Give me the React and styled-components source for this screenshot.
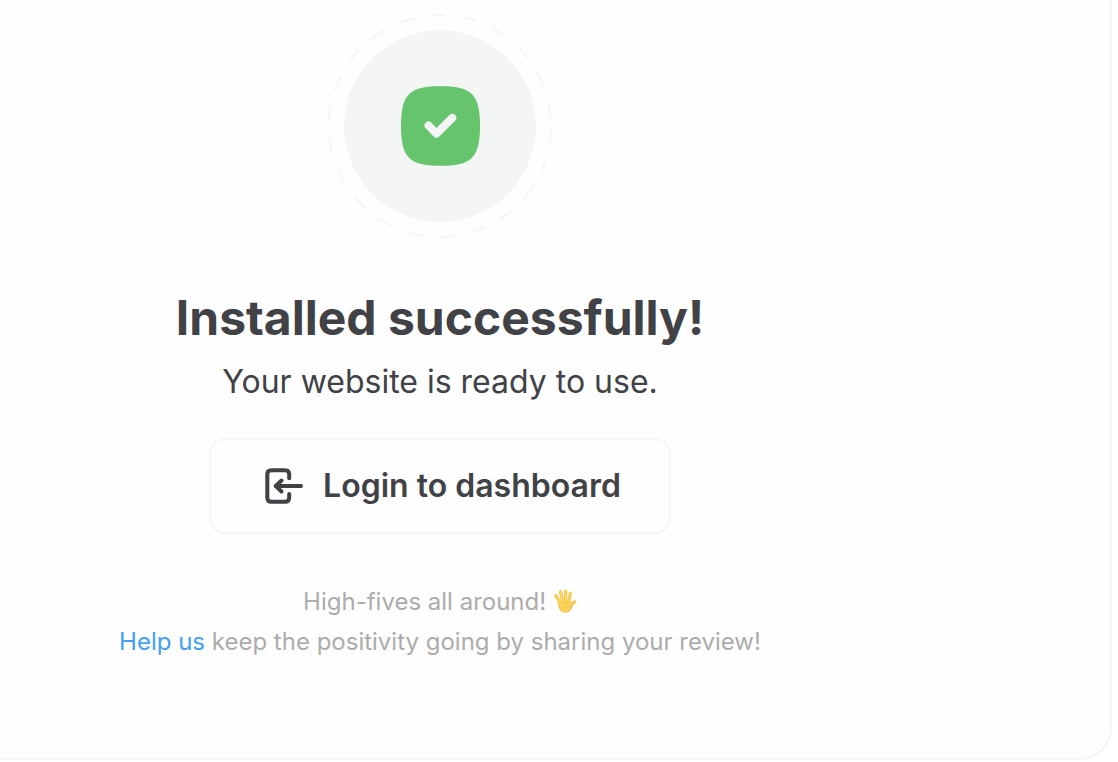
import React from 'react';
import styled, { createGlobalStyle } from 'styled-components';

const colors = {
  text: '#414246',
  muted: '#acacac',
  link: '#42a0f5',
  line: '#f5f6f6',
  soft: '#f4f6f6',
  success: '#66c56c',
};

const GlobalStyle = createGlobalStyle`
  * {
    box-sizing: border-box;
  }

  body {
    margin: 0;
    background: #fff;
    color: ${colors.text};
    font-family: Inter, 'Liberation Sans', sans-serif;
  }
`;

const Card = styled.main`
  display: flex;
  flex-direction: column;
  align-items: center;
  margin-right: 6px;
  padding: 14px 230px 96px 0;
  border: 2px solid ${colors.line};
  border-width: 0 2px 2px 0;
  border-radius: 0 0 32px 0;
  background: #fefefe;
  text-align: center;
`;

const Badge = styled.svg`
  display: block;
  width: 224px;
  height: 224px;
`;

const Title = styled.h1`
  margin: 48px 0 8px;
  font-size: 48px;
  font-weight: 700;
  line-height: 64px;
`;

const Subtitle = styled.p`
  margin: 0;
  font-size: 32px;
  line-height: 48px;
`;

const LoginButton = styled.button`
  display: flex;
  align-items: center;
  gap: 16px;
  height: 96px;
  margin: 32px 0 48px;
  padding: 0 48px;
  border: 2px solid ${colors.line};
  border-radius: 16px;
  background: transparent;
  color: inherit;
  font-family: inherit;
  font-size: 32px;
  font-weight: 600;
  line-height: 48px;
  cursor: pointer;

  svg {
    width: 48px;
    height: 48px;
  }
`;

const Note = styled.p`
  margin: 0;
  color: ${colors.muted};
  font-size: 24px;
  line-height: 40px;

  a {
    color: ${colors.link};
    text-decoration: none;
  }
`;

const Hand = styled.svg`
  width: 24px;
  height: 24px;
  vertical-align: -3px;
`;

const SuccessBadge = () => (
  <Badge viewBox="0 0 224 224" fill="none" aria-hidden="true">
    <circle cx="112" cy="112" r="111" stroke={colors.line} strokeWidth="2" strokeDasharray="16 16" />
    <circle cx="112" cy="112" r="96" fill={colors.soft} />
    <path
      d="M73 112C73 98.500 74.500 86.800 81 80.300C87.500 73.800 99 72.300 112.500 72.300C126 72.300 137.500 73.800 144 80.300C150.500 86.800 152 98.500 152 112C152 125.500 150.500 137.200 144 143.700C137.500 150.200 126 151.700 112.500 151.700C99 151.700 87.500 150.200 81 143.700C74.500 137.200 73 125.500 73 112Z"
      fill={colors.success}
    />
    <path
      d="M100.500 111.500L108.500 119.700L124.300 103.900"
      stroke={colors.soft}
      strokeWidth="8"
      strokeLinecap="round"
      strokeLinejoin="round"
    />
  </Badge>
);

const LoginIcon = () => (
  <svg
    viewBox="0 0 48 48"
    fill="none"
    stroke="currentColor"
    strokeWidth="4"
    strokeLinecap="round"
    strokeLinejoin="round"
    aria-hidden="true"
  >
    <path d="M30.200 16.200V12.300Q30.200 8.300 26.200 8.300H12.300Q8.300 8.300 8.300 12.300V35.700Q8.300 39.700 12.300 39.700H26.200Q30.200 39.700 30.200 35.700V32" />
    <path d="M16.800 24H42" />
    <path d="M22.500 18.500L16.800 24L22.500 29.500" />
  </svg>
);

const HandIcon = () => (
  <Hand viewBox="0 0 24 24" role="img" aria-label="Raised hand">
    <g fill="none" stroke="#eab54a" strokeLinecap="round" strokeLinejoin="round">
      <path d="M6.700 13L2.900 6.800" strokeWidth="3.200" />
      <path d="M9.500 11L7.600 2.900" strokeWidth="3.200" />
      <path d="M12.700 11L12.700 2" strokeWidth="3.200" />
      <path d="M16 12L17.300 4.200" strokeWidth="3.100" />
      <path d="M16.500 18L19 14.300L21.800 12.800" strokeWidth="3.200" />
    </g>
    <path
      d="M5 12.500C5 9.800 17 8.800 17.400 11.500L17.800 14.800L20.500 15.200C18.500 20.500 16.300 23.600 12 23.600C7.300 23.600 5.500 20 5 12.500Z"
      fill="#ebb448"
    />
    <g fill="none" stroke="#fbd45e" strokeLinecap="round" strokeLinejoin="round">
      <path d="M6.700 13L3 6.800" strokeWidth="2.500" />
      <path d="M9.500 11L7.700 3" strokeWidth="2.500" />
      <path d="M12.700 11L12.700 2.100" strokeWidth="2.500" />
      <path d="M16 12L17.200 4.300" strokeWidth="2.400" />
      <path d="M16 18L18.800 14.200L21.500 12.900" strokeWidth="2.400" />
    </g>
    <path
      d="M5.700 12.500C6 10 16.800 9.300 17 11.500L16.800 15.500L18.800 15.800C17.600 20.300 15.500 22.900 12 22.900C7.800 22.900 6.300 19 5.700 12.500Z"
      fill="#fbd15a"
    />
    <path
      d="M15.700 14.300C13.800 14.900 12.800 16.300 12.800 18.300M8.300 14.300C10.500 13.500 13.200 13.300 15.200 13.600"
      fill="none"
      stroke="#efbb4c"
      strokeWidth="0.700"
      strokeLinecap="round"
    />
  </Hand>
);

const App = () => (
  <>
    <GlobalStyle />
    <Card>
      <SuccessBadge />
      <Title>Installed successfully!</Title>
      <Subtitle>Your website is ready to use.</Subtitle>
      <LoginButton type="button">
        <LoginIcon />
        Login to dashboard
      </LoginButton>
      <Note>
        High-fives all around! <HandIcon />
      </Note>
      <Note>
        <a href="#review">Help us</a> keep the positivity going by sharing your review!
      </Note>
    </Card>
  </>
);

export default App;
